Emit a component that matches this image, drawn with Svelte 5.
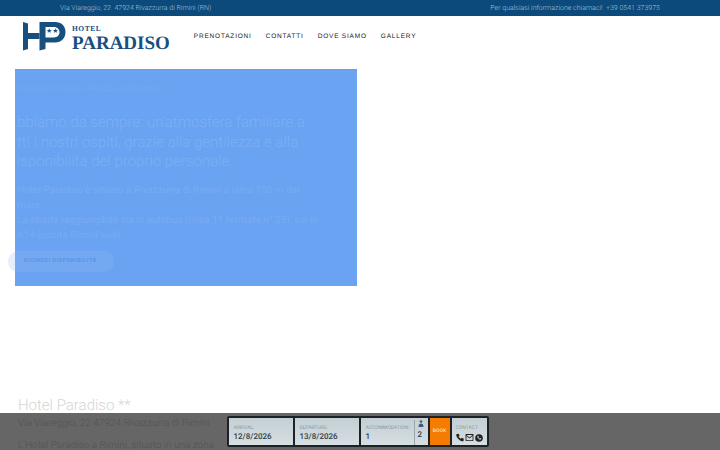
<script>
  const navItems = ['Prenotazioni', 'Contatti', 'Dove siamo', 'Gallery'];
</script>

<div class="topbar">
  <span>Via Viareggio, 22&nbsp; 47924 Rivazzurra di Rimini (RN)</span>
  <span>Per qualsiasi informazione chiamaci! &nbsp;+39 0541 373975</span>
</div>

<header>
  <a class="logo" href="#top">
    <svg width="44" height="29" viewBox="0 0 44 29" aria-hidden="true">
      <path fill="#17507f" d="M0 0l5 1.500V11h11.500v6H5v10L0 28.500z" />
      <path fill="#17507f" fill-rule="evenodd" d="M16.500 0H32c6.500 0 10.500 4 10.500 10S38.500 20.500 32 20.500h-9.500V27l-6 1.500zM22.500 5v10.500H31c3 0 5.500-2 5.500-5.200S34 5 31 5z" />
      <text x="23" y="11" class="stars">★★</text>
    </svg>
    <span class="wordmark">
      <span class="hotel">HOTEL</span>
      <span class="paradiso">PARADISO</span>
    </span>
  </a>
  <nav>
    {#each navItems as item}
      <a href="#top">{item}</a>
    {/each}
  </nav>
</header>

<main>
  <section class="hero">
    <p class="kicker">Vacanze in riviera | Rivazzurra di Rimini</p>
    <h2>bbiamo da sempre: un'atmosfera familiare a<br />tti i nostri ospiti, grazie alla gentilezza e alla<br />isponibilità del proprio personale.</h2>
    <p class="intro">
      Hotel Paradiso è situato a Rivazzurra di Rimini a circa 150 m dal<br />mare.<br />
      La strada raggiungibile sia in autobus (linea 11 fermata n° 25), sia in<br />A14 (uscita Rimini sud).
    </p>
    <a class="cta" href="#top">Richiedi disponibilità</a>
  </section>

  <section class="about">
    <h1>Hotel Paradiso **</h1>
    <p class="address">Via Viareggio, 22 47924 Rivazzurra di Rimini</p>
    <p>L'Hotel Paradiso a Rimini, situato in una zona</p>
  </section>
</main>

<div class="bookbar">
  <form class="booking">
    <div class="field arrival"><small>Arrival:</small><b>12/8/2026</b></div>
    <div class="field departure"><small>Departure:</small><b>13/8/2026</b></div>
    <div class="field accommodation">
      <div class="rooms"><small>Accommodation:</small><b>1</b></div>
      <div class="guests">
        <svg width="6" height="7" viewBox="0 0 6 7" aria-hidden="true">
          <circle cx="3" cy="1.500" r="1.300" fill="#46586a" />
          <path fill="#46586a" d="M.5 7c0-2.500 1-3.500 2.500-3.500S5.500 4.500 5.500 7z" />
        </svg>
        <b>2</b>
      </div>
    </div>
    <div class="book">Book</div>
    <div class="field contact">
      <small>Contact</small>
      <div class="icons">
        <svg width="8" height="9" viewBox="0 0 9 9" aria-hidden="true">
          <path fill="#222" d="M1 .5 3 .2l1 2.300-1.100.9c.5 1 1.300 1.800 2.500 2.400l1-1.100L8.800 6l-.3 2.200C8.300 8.700 7.500 9 6.800 8.800 3.800 8 1.200 5.300.3 2.300.1 1.500.4.800 1 .5z" />
        </svg>
        <svg width="9" height="7" viewBox="0 0 9 8" aria-hidden="true">
          <path fill="#222" d="M.5 0h8c.3 0 .5.200.5.500V7.500c0 .3-.2.500-.5.500h-8C.2 8 0 7.800 0 7.500V.5C0 .2.200 0 .5 0zM1 1.200 4.500 4 8 1.200zM1 2.400V7h7V2.400L4.500 5.200z" />
        </svg>
        <svg width="8" height="8" viewBox="0 0 9 9" aria-hidden="true">
          <circle cx="4.500" cy="4.500" r="4.300" fill="#222" />
          <path fill="#c9d5d9" d="M3 2.200 3.800 2l.6 1.300-.6.600c.3.600.7 1 1.300 1.300l.6-.6L7 5.200l-.2.800c-.3.400-.8.500-1.300.4C4.200 6 3 4.900 2.600 3.500c-.1-.5 0-1 .4-1.300z" />
        </svg>
      </div>
    </div>
  </form>
</div>

<style>
  :global(body) {
    overflow: hidden;
    background: #fff;
    font-family: Roboto, "Liberation Sans", sans-serif;
    text-rendering: geometricPrecision;
  }

  p, h1, h2 {
    margin: 0;
    font-weight: 300;
  }

  a {
    text-decoration: none;
  }

  .topbar {
    display: flex;
    justify-content: space-between;
    height: 16px;
    padding: 0 60px;
    background: #0c4a7c;
    color: #a5c0d6;
    font-size: 7px;
    font-weight: 300;
    line-height: 16px;
  }

  header {
    display: flex;
    align-items: flex-start;
    height: 53px;
  }

  .logo {
    display: flex;
    gap: 5px;
    margin: 6px 0 0 23px;
  }

  .logo svg {
    display: block;
  }

  .logo .stars {
    fill: #17507f;
    font-size: 7px;
    font-family: "DejaVu Sans", sans-serif;
  }

  .wordmark {
    display: flex;
    flex-direction: column;
    margin-top: 2px;
    color: #17507f;
    font-family: "Liberation Serif", serif;
    font-weight: 700;
  }

  .hotel {
    font-size: 7.500px;
    line-height: 9px;
    letter-spacing: .5px;
  }

  .paradiso {
    margin-top: 1px;
    font-size: 19px;
    line-height: 20px;
  }

  nav {
    display: flex;
    gap: 14px;
    margin: 16px 0 0 24px;
  }

  nav a {
    color: #222;
    font-family: "Liberation Sans", sans-serif;
    font-size: 6.500px;
    line-height: 9px;
    letter-spacing: .8px;
    text-transform: uppercase;
  }

  .hero {
    box-sizing: border-box;
    width: 342px;
    height: 217px;
    margin-left: 15px;
    padding: 14px 2px 0;
    border-top: 1px solid #6c9ee0;
    background: #6aa3f1;
    color: #7cb0f5;
  }

  .kicker {
    font-size: 8.500px;
    line-height: 10px;
    color: #76abf3;
  }

  .hero h2 {
    margin-top: 19px;
    font-size: 15px;
    line-height: 19.700px;
  }

  .intro {
    margin-top: 11px;
    font-size: 10px;
    line-height: 15px;
    color: #78acf4;
    font-weight: 400;
  }

  .cta {
    display: block;
    width: 106px;
    height: 21px;
    margin: 8px 0 0 -9px;
    padding-left: 16px;
    box-sizing: border-box;
    border-radius: 11px;
    background: linear-gradient(90deg, #e4eefc 0, #e4eefc 7px, #74a9f2 7px);
    color: #5a94ea;
    font-size: 5.500px;
    font-weight: 700;
    line-height: 21px;
    letter-spacing: .5px;
    text-transform: uppercase;
  }

  .about {
    margin: 110px 0 0 18px;
    color: #d5d5d5;
  }

  .about h1 {
    font-size: 15px;
    line-height: 18px;
  }

  .about p {
    margin-top: 4px;
    font-size: 10px;
    line-height: 12px;
    color: #d0d0d0;
  }

  .about .address {
    margin-bottom: 10px;
  }

  .bookbar {
    position: fixed;
    left: 0;
    right: 0;
    bottom: 0;
    display: flex;
    justify-content: center;
    height: 37px;
    padding-right: 5px;
    background: rgba(0, 0, 0, .6);
  }

  .booking {
    display: flex;
    gap: 2px;
    height: 27px;
    margin-top: 3px;
    padding: 2px;
    background: #1d2226;
    border-radius: 2px;
  }

  .field {
    box-sizing: border-box;
    padding: 7px 4px 0 5px;
    background: linear-gradient(#c3cfd4, #d6dfe2);
    color: #2f3e46;
  }

  .field small {
    display: block;
    color: #8c9aa1;
    font-size: 5px;
    line-height: 7px;
    text-transform: uppercase;
  }

  .field b {
    display: block;
    font-size: 8px;
    font-weight: 500;
    line-height: 10px;
  }

  .arrival, .departure {
    width: 64px;
  }

  .accommodation {
    display: flex;
    justify-content: space-between;
    width: 67px;
    padding-right: 0;
  }

  .guests {
    box-sizing: border-box;
    width: 14px;
    margin-top: -5px;
    padding-left: 3px;
    border-left: 1px solid #9aa8ae;
  }

  .guests svg {
    display: block;
    margin-bottom: 3px;
  }

  .book {
    width: 20px;
    background: #f57c00;
    color: #ffd9a8;
    font-size: 5px;
    font-weight: 700;
    line-height: 27px;
    text-align: center;
    text-transform: uppercase;
  }

  .contact {
    width: 35px;
    padding-left: 4px;
    padding-right: 0;
  }

  .icons {
    display: flex;
    align-items: center;
    gap: 1px;
    margin-top: 1px;
  }
</style>
